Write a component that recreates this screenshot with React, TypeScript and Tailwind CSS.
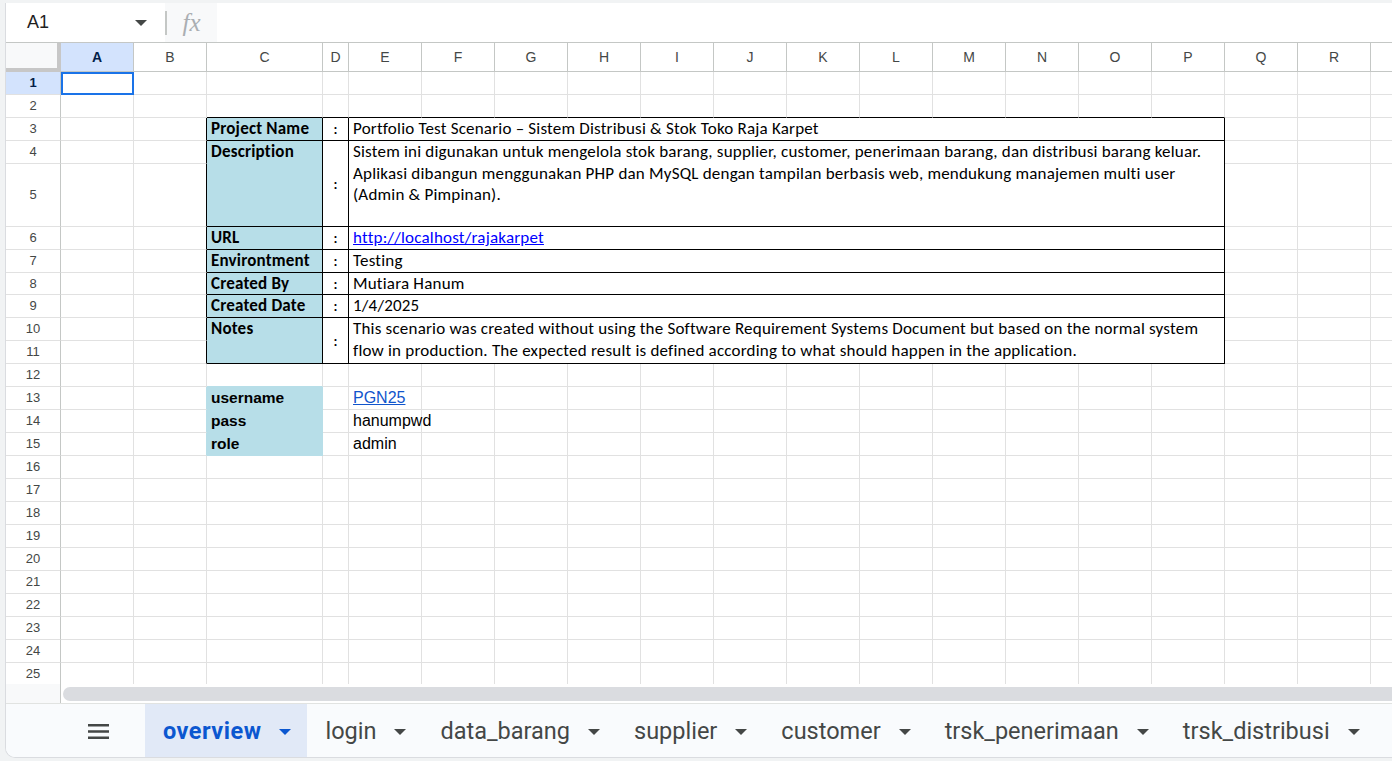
import React from 'react';

// Google Sheets style view of the "overview" tab

const COLS = ['A', 'B', 'C', 'D', 'E', 'F', 'G', 'H', 'I', 'J', 'K', 'L', 'M', 'N', 'O', 'P', 'Q', 'R', 'S'];

const CALIBRI = "font-['Carlito','Lato',sans-serif] text-[17px] tracking-[0.2px] text-black";
const ARIAL = "font-['Liberation_Sans',Arial,sans-serif]";

interface TableRow {
  label: string;
  value: React.ReactNode;
  tall?: boolean;
}

const tableRows: Record<number, TableRow> = {
  3: { label: 'Project Name', value: 'Portfolio Test Scenario – Sistem Distribusi & Stok Toko Raja Karpet' },
  4: {
    label: 'Description',
    tall: true,
    value: (
      <>
        <div>Sistem ini digunakan untuk mengelola stok barang, supplier, customer, penerimaan barang, dan distribusi barang keluar.</div>
        <div>Aplikasi dibangun menggunakan PHP dan MySQL dengan tampilan berbasis web, mendukung manajemen multi user</div>
        <div>(Admin &amp; Pimpinan).</div>
      </>
    ),
  },
  6: {
    label: 'URL',
    value: <span className="text-[#0000ff] underline">http://localhost/rajakarpet</span>,
  },
  7: { label: 'Environtment', value: 'Testing' },
  8: { label: 'Created By', value: 'Mutiara Hanum' },
  9: { label: 'Created Date', value: '1/4/2025' },
  10: {
    label: 'Notes',
    tall: true,
    value: (
      <>
        <div>This scenario was created without using the Software Requirement Systems Document but based on the normal system</div>
        <div>flow in production. The expected result is defined according to what should happen in the application.</div>
      </>
    ),
  },
};

const loginRows: Record<number, [string, React.ReactNode]> = {
  13: ['username', <span className="text-[#1155cc] underline">PGN25</span>],
  14: ['pass', 'hanumpwd'],
  15: ['role', 'admin'],
};

function gridCellClass(r: number, c: number) {
  let right = 'border-r-[#e1e1e1]';
  let bottom = 'border-b-[#e1e1e1]';
  if (r >= 3 && r <= 11 && c === 1) right = 'border-r-black';
  if (r >= 13 && r <= 15 && (c === 1 || c === 2)) right = 'border-r-[#b7dee8]';
  if (r === 2 && c >= 2 && c <= 15) bottom = 'border-b-black';
  if ((r === 12 || r === 13 || r === 14 || r === 15) && c === 2) bottom = 'border-b-[#b7dee8]';
  return `border-r border-b ${right} ${bottom}`;
}

function SheetRow({ r }: { r: number }) {
  const cells: React.ReactNode[] = [];
  const selected = r === 1;
  cells.push(
    <div
      key="h"
      className={`flex items-center justify-center border-r border-b border-r-[#c4c7c5] border-b-[#e1e1e1] font-['Liberation_Sans_Narrow','Liberation_Sans',sans-serif] text-[13px] ${
        selected ? 'bg-[#d3e3fd] font-bold text-[#041e49]' : 'bg-white text-[#444746]'
      }`}
    >
      {r}
    </div>
  );

  const tableStart = tableRows[r];
  const covered = r === 5 || r === 11;
  const inTable = r >= 3 && r <= 11;

  for (let c = 0; c < COLS.length; c++) {
    if (inTable && c >= 2 && c <= 15) {
      if (covered) continue;
      if (!tableStart) continue;
      if (c === 2) {
        cells.push(
          <div
            key={c}
            className={`${tableStart.tall ? 'row-span-2' : ''} whitespace-nowrap border-r border-b border-black bg-[#b7dee8] pl-[4px] leading-[21.5px] font-bold ${CALIBRI}`}
          >
            {tableStart.label}
          </div>
        );
      } else if (c === 3) {
        cells.push(
          <div
            key={c}
            className={`${tableStart.tall ? 'row-span-2 items-center' : 'items-start'} flex justify-center border-r border-b border-black leading-[21.5px] ${CALIBRI}`}
          >
            :
          </div>
        );
      } else if (c === 4) {
        cells.push(
          <div
            key={c}
            className={`${tableStart.tall ? 'row-span-2' : ''} col-span-12 whitespace-nowrap border-r border-b border-black pl-[4px] leading-[21.5px] ${CALIBRI}`}
          >
            {tableStart.value}
          </div>
        );
      }
      continue;
    }

    const login = loginRows[r];
    let content: React.ReactNode = null;
    let extra = '';
    if (login && c === 2) {
      content = login[0];
      extra = `bg-[#b7dee8] font-bold text-black ${ARIAL} text-[15.5px]`;
    } else if (login && c === 4) {
      content = login[1];
      extra = `text-black ${ARIAL} text-[16px]`;
    }

    cells.push(
      <div key={c} className={`relative flex items-center pl-[4px] ${gridCellClass(r, c)} ${extra}`}>
        {content}
        {selected && c === 0 && (
          <div className="absolute left-0 top-0 -right-[1px] -bottom-[1px] border-2 border-[#1a73e8]" />
        )}
      </div>
    );
  }
  return <>{cells}</>;
}

function Caret({ className }: { className: string }) {
  return (
    <svg width="12" height="6" viewBox="0 0 12 6" className={className}>
      <path d="M0 0h12L6 6z" fill="currentColor" />
    </svg>
  );
}

const tabs = ['overview', 'login', 'data_barang', 'supplier', 'customer', 'trsk_penerimaan', 'trsk_distribusi'];

export default function App() {
  const rows = Array.from({ length: 25 }, (_, i) => i + 1);
  return (
    <div className="h-[761px] w-[1392px] overflow-hidden bg-[#f1f3f4]">
      <div className="ml-[5px] mt-[3px] flex h-[755px] w-[1387px] flex-col overflow-hidden rounded-bl-[10px] border-b border-l border-[#dadce0] bg-white">
        {/* formula bar */}
        <div className="flex h-[39px] shrink-0 items-stretch">
          <div className="flex w-[159px] items-center justify-between pl-[21px] pr-[18px]">
            <span className={`${ARIAL} text-[18px] text-[#1f1f1f]`}>A1</span>
            <Caret className="text-[#444746]" />
          </div>
          <div className="flex items-center bg-[#f8f9fa]">
            <div className="h-[24px] w-[2px] bg-[#c4c7c5]" />
            <div className="flex w-[50px] items-center justify-center pr-[1px] font-['Liberation_Serif',serif] text-[25px] italic text-[#aaaeb2]">
              fx
            </div>
          </div>
          <div className="flex-1 bg-white" />
        </div>

        {/* grid */}
        <div className="grid h-[642px] shrink-0 grid-cols-[55px_73px_73px_116px_26px_repeat(15,73px)] grid-rows-[29px_repeat(4,23px)_63px_23px_23px_22px_repeat(16,23px)_22px] overflow-hidden border-t border-[#c4c7c5]">
          <div className="border-r-4 border-b-4 border-[#c7c7c7] bg-[#f8f9fa]" />
          {COLS.map((col, i) => (
            <div
              key={col}
              className={`flex items-center justify-center border-r border-b border-[#c4c7c5] ${ARIAL} text-[14px] ${
                i === 0 ? 'bg-[#d3e3fd] font-bold text-[#041e49]' : 'bg-white text-[#444746]'
              }`}
            >
              {col === 'S' ? null : col}
            </div>
          ))}
          {rows.map((r) => (
            <SheetRow key={r} r={r} />
          ))}
        </div>

        {/* horizontal scroll */}
        <div className="flex h-[19px] shrink-0">
          <div className="w-[55px] border-r border-[#c4c7c5] bg-[#f8f9fa]" />
          <div className="flex-1 py-[3px] pl-[2px]">
            <div className="h-[14px] rounded-l-full bg-[#dadce0]" />
          </div>
        </div>

        {/* sheet tabs */}
        <div className="flex h-[54px] shrink-0 items-stretch border-t border-[#e1e3e1] bg-[#f9fbfd] font-['Roboto',sans-serif] text-[23.5px]">
          <div className="flex w-[139px] items-center justify-end pr-[36px] pt-[2px]">
            <svg width="21" height="15" viewBox="0 0 21 15">
              <path d="M0 1.25h21M0 7.5h21M0 13.75h21" stroke="#444746" strokeWidth="2.5" />
            </svg>
          </div>
          {tabs.map((t, i) => (
            <div
              key={t}
              className={`flex items-center gap-[18px] pl-[18px] pr-[16px] pt-[3px] ${
                i === 0 ? 'bg-[#e1e9f7] font-bold tracking-[0.5px] text-[#0b57d0]' : 'text-[#444746]'
              }`}
            >
              <span>{t}</span>
              <Caret className={i === 0 ? 'text-[#0b57d0]' : 'text-[#444746]'} />
            </div>
          ))}
        </div>
      </div>
    </div>
  );
}
